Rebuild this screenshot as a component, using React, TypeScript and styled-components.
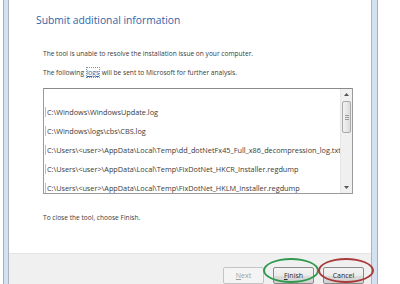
import styled, { createGlobalStyle } from 'styled-components';

const GlobalStyle = createGlobalStyle`
  html, body {
    margin: 0;
    padding: 0;
    background: #ffffff;
    height: 100%;
    overflow: hidden;
  }
  #root {
    height: 100%;
  }
`;

const Frame = styled.div`
  margin-left: 3px;
  width: 364px;
  height: 100%;
  padding: 0 5px 0 4px;
  background: #d3e1f0;
  border-left: 1px solid #a3afbd;
  border-right: 1px solid #a3afbd;
`;

const Page = styled.div`
  height: 100%;
  box-sizing: border-box;
  display: flex;
  flex-direction: column;
  background: #ffffff;
  border-left: 1px solid #aab4bf;
  border-right: 1px solid #aab4bf;
  font-family: 'Open Sans', 'Noto Sans', sans-serif;
  color: #3a3a3a;
`;

const Content = styled.div`
  height: 255px;
  box-sizing: border-box;
  padding: 13px 18px 0 27px;
`;

const Title = styled.h1`
  margin: 0;
  font-size: 10.3px;
  font-weight: 400;
  color: #2f64a8;
  line-height: 14px;
`;

const Body = styled.div`
  padding-left: 7px;
`;

const Line = styled.p<{ $top: number }>`
  margin: ${(p) => p.$top}px 0 0;
  font-size: 6.6px;
  line-height: 10px;
  white-space: nowrap;
`;

const LogLink = styled.span`
  color: #2f64a8;
  text-decoration: underline;
  outline: 1px dotted #7a93b8;
  margin: 0 1px;
`;

const ListBox = styled.div`
  margin-top: 10px;
  height: 106px;
  box-sizing: border-box;
  border: 1px solid #9a9a9a;
  border-top-color: #8a8a8a;
  display: flex;
  overflow: hidden;
`;

const Items = styled.ul`
  flex: 1;
  min-width: 0;
  margin: 0;
  padding: 18px 0 0 1px;
  list-style: none;
  display: flex;
  flex-direction: column;
  gap: 9px;
`;

const Item = styled.li`
  font-size: 7.3px;
  line-height: 10px;
  white-space: nowrap;
  overflow: hidden;
  border-left: 1px solid #bdbdbd;
  padding-left: 1px;
`;

const ScrollBar = styled.div`
  width: 11px;
  background: #f0f0f0;
  border-left: 1px solid #e6e6e6;
  display: flex;
  flex-direction: column;
  align-items: center;
`;

const Arrow = styled.div`
  height: 11px;
  display: flex;
  align-items: center;
  justify-content: center;
`;

const Thumb = styled.div`
  width: 9px;
  height: 32px;
  margin-top: 1px;
  box-sizing: border-box;
  border: 1px solid #a8a8a8;
  border-radius: 2px;
  background: linear-gradient(to right, #f2f2f2, #dcdcdc);
  display: flex;
  align-items: center;
  justify-content: center;
`;

const Grip = styled.div`
  width: 4px;
  height: 5px;
  background: repeating-linear-gradient(to bottom, #9a9a9a 0 1px, transparent 1px 2px);
`;

const Spacer = styled.div`
  flex: 1;
`;

const Footer = styled.div`
  flex: 1;
  background: #f0f0f0;
  border-top: 1px solid #e4e4e4;
  display: flex;
  justify-content: flex-end;
  align-items: flex-start;
  padding: 7px 7px 0 0;
  gap: 9px;
`;

const ButtonWrap = styled.div`
  position: relative;
`;

const Button = styled.button<{ $disabled?: boolean }>`
  width: 41px;
  height: 17px;
  padding: 0;
  font-family: 'Open Sans', 'Noto Sans', sans-serif;
  font-size: 7px;
  color: ${(p) => (p.$disabled ? '#a0a0a0' : '#2a2a2a')};
  border: 1px solid ${(p) => (p.$disabled ? '#c4c4c4' : '#8a8a8a')};
  border-radius: 2px;
  background: ${(p) =>
    p.$disabled ? '#f4f4f4' : 'linear-gradient(to bottom, #f4f4f4 0%, #ebebeb 50%, #dcdcdc 51%, #d2d2d2 100%)'};
  u {
    text-decoration: underline;
  }
`;

const Ring = styled.div<{ $color: string; $left: number }>`
  position: absolute;
  left: ${(p) => p.$left}px;
  top: -3px;
  width: 52px;
  height: 21px;
  border: 2px solid ${(p) => p.$color};
  border-radius: 50%;
  pointer-events: none;
`;

const logs = [
  'C:\\Windows\\WindowsUpdate.log',
  'C:\\Windows\\logs\\cbs\\CBS.log',
  'C:\\Users\\<user>\\AppData\\Local\\Temp\\dd_dotNetFx45_Full_x86_decompression_log.txt',
  'C:\\Users\\<user>\\AppData\\Local\\Temp\\FixDotNet_HKCR_Installer.regdump',
  'C:\\Users\\<user>\\AppData\\Local\\Temp\\FixDotNet_HKLM_Installer.regdump',
];

const App = () => {
  return (
    <>
      <GlobalStyle />
      <Frame>
        <Page>
          <Content>
            <Title>Submit additional information</Title>
            <Body>
              <Line $top={22}>The tool is unable to resolve the installation issue on your computer.</Line>
              <Line $top={9}>
                The following <LogLink>logs</LogLink> will be sent to Microsoft for further analysis.
              </Line>
              <ListBox>
                <Items>
                  {logs.map((l) => (
                    <Item key={l}>{l}</Item>
                  ))}
                </Items>
                <ScrollBar>
                  <Arrow>
                    <svg width="5" height="3" viewBox="0 0 5 3">
                      <path d="M0 3 L2.5 0 L5 3 Z" fill="#555" />
                    </svg>
                  </Arrow>
                  <Thumb>
                    <Grip />
                  </Thumb>
                  <Spacer />
                  <Arrow>
                    <svg width="5" height="3" viewBox="0 0 5 3">
                      <path d="M0 0 L2.5 3 L5 0 Z" fill="#555" />
                    </svg>
                  </Arrow>
                </ScrollBar>
              </ListBox>
              <Line $top={19}>To close the tool, choose Finish.</Line>
            </Body>
          </Content>
          <Footer>
            <ButtonWrap>
              <Button $disabled>
                <u>N</u>ext
              </Button>
            </ButtonWrap>
            <ButtonWrap>
              <Button>
                <u>F</u>inish
              </Button>
              <Ring $color="#2f9a4e" $left={-10} />
            </ButtonWrap>
            <ButtonWrap>
              <Button>Cancel</Button>
              <Ring $color="#a83a3a" $left={-5} />
            </ButtonWrap>
          </Footer>
        </Page>
      </Frame>
    </>
  );
};

export default App;
